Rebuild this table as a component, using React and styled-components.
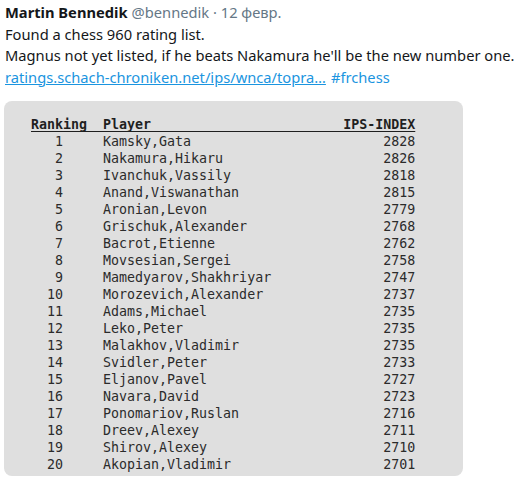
import React from 'react'
import styled, {createGlobalStyle} from 'styled-components'

const GlobalStyle = createGlobalStyle`
  body {
    margin: 0;
    background: #ffffff;
  }
`

const rows = [
  [1, 'Kamsky,Gata', 2828],
  [2, 'Nakamura,Hikaru', 2826],
  [3, 'Ivanchuk,Vassily', 2818],
  [4, 'Anand,Viswanathan', 2815],
  [5, 'Aronian,Levon', 2779],
  [6, 'Grischuk,Alexander', 2768],
  [7, 'Bacrot,Etienne', 2762],
  [8, 'Movsesian,Sergei', 2758],
  [9, 'Mamedyarov,Shakhriyar', 2747],
  [10, 'Morozevich,Alexander', 2737],
  [11, 'Adams,Michael', 2735],
  [12, 'Leko,Peter', 2735],
  [13, 'Malakhov,Vladimir', 2735],
  [14, 'Svidler,Peter', 2733],
  [15, 'Eljanov,Pavel', 2727],
  [16, 'Navara,David', 2723],
  [17, 'Ponomariov,Ruslan', 2716],
  [18, 'Dreev,Alexey', 2711],
  [19, 'Shirov,Alexey', 2710],
  [20, 'Akopian,Vladimir', 2701]
]

const Tweet = styled.div`
  padding: 2px 5px 0 5px;
  font-family: 'Noto Sans', 'Open Sans', sans-serif;
  font-size: 14.7px;
  line-height: 21.6px;
  color: #14171a;
`

const Header = styled.div`
  display: flex;
  gap: 4px;
  white-space: nowrap;
`

const Name = styled.span`
  font-weight: 700;
`

const Meta = styled.span`
  color: #657786;
`

const Line = styled.div`
  white-space: nowrap;
`

const Link = styled.a`
  color: #1b95e0;
  text-decoration: ${({underline}) => (underline ? 'underline' : 'none')};
  margin-right: ${({underline}) => (underline ? '5px' : '0')};
`

const Card = styled.div`
  margin: 13px 0 0 4px;
  width: 459px;
  box-sizing: border-box;
  padding: 15px 0 3px 27px;
  background: #dfdfdf;
  border-radius: 8px;
  font-family: 'DejaVu Sans Mono', 'Liberation Mono', monospace;
  font-size: 13.3px;
  line-height: 17px;
  color: #2b2b2b;
`

const HeadLine = styled.div`
  white-space: pre;
  font-weight: 700;
  text-decoration: underline;
  text-underline-offset: 2px;
  color: #1f1f1f;
`

const Row = styled.div`
  display: grid;
  grid-template-columns: 4ch 5ch 30ch 9ch;
  white-space: pre;
`

const Rank = styled.span`
  text-align: right;
`

const Player = styled.span`
  grid-column: 3;
`

const Score = styled.span`
  text-align: right;
`

const headText = 'Ranking  Player' + ' '.repeat(24) + 'IPS-INDEX'

export default function App() {
  return (
    <>
      <GlobalStyle />
      <Tweet>
        <Header>
          <Name>Martin Bennedik</Name>
          <Meta>@bennedik · 12 февр.</Meta>
        </Header>
        <Line>Found a chess 960 rating list.</Line>
        <Line>Magnus not yet listed, if he beats Nakamura he'll be the new number one.</Line>
        <Line>
          <Link underline href="#">ratings.schach-chroniken.net/ips/wnca/topra…</Link>
          <Link href="#">#frchess</Link>
        </Line>
      </Tweet>
      <Card>
        <HeadLine>{headText}</HeadLine>
        {rows.map(([rank, player, score]) => (
          <Row key={rank}>
            <Rank>{rank}</Rank>
            <Player>{player}</Player>
            <Score>{score}</Score>
          </Row>
        ))}
      </Card>
    </>
  )
}
